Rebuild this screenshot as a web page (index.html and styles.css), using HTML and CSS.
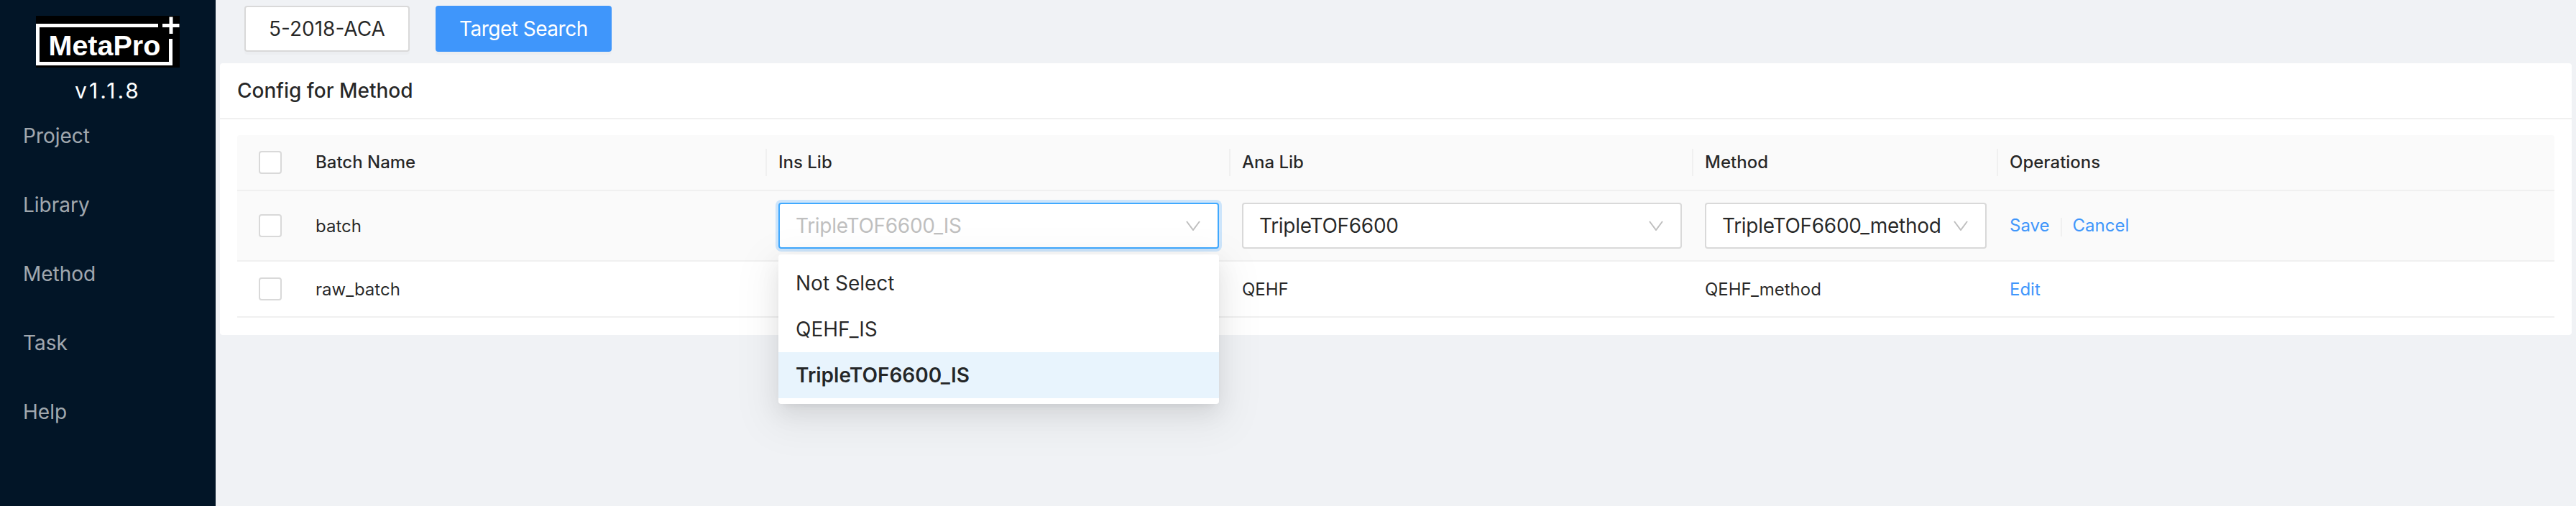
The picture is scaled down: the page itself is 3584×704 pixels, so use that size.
FILE: index.html
```html
<!DOCTYPE html>
<html lang="en">
<head>
    <meta charset="UTF-8">
    <meta name="viewport" content="width=device-width, initial-scale=1.0">
    <title>MetaPro</title>
    <link rel="stylesheet" href="styles.css">
</head>
<body>
    <aside class="sidebar">
        <svg class="logo" viewBox="0 0 200 72" width="200" height="72">
            <rect width="200" height="72" fill="#000"/>
            <path class="logo-frame" d="M170 13.5H2.5V66.5H187.5V32"/>
            <path class="logo-plus" d="M176 13.5H199.5M188 1.5V25"/>
            <text class="logo-text" x="17.5" y="55">MetaPro</text>
        </svg>
        <div class="version">v1.1.8</div>

        <nav class="menu">
            <a>Project</a>
            <a>Library</a>
            <a>Method</a>
            <a>Task</a>
            <a>Help</a>
        </nav>
    </aside>

    <main class="content">
        <div class="topbar">
            <button class="btn">5-2018-ACA</button>
            <button class="btn btn-primary">Target Search</button>
        </div>

        <section class="card">
            <h2 class="card-title">Config for Method</h2>
            <div class="card-body">
                <table class="batch-table">
                    <colgroup>
                        <col class="col-check">
                        <col class="col-lib">
                        <col class="col-lib-wide">
                        <col class="col-lib">
                        <col class="col-method">
                        <col class="col-ops">
                    </colgroup>
                    <thead>
                        <tr>
                            <th class="check-cell"><span class="checkbox"></span></th>
                            <th>Batch Name</th>
                            <th>Ins Lib</th>
                            <th>Ana Lib</th>
                            <th>Method</th>
                            <th>Operations</th>
                        </tr>
                    </thead>
                    <tbody>
                        <tr class="row-editing">
                            <td class="check-cell"><span class="checkbox"></span></td>
                            <td>batch</td>
                            <td>
                                <div class="select select-open">
                                    <span class="select-placeholder">TripleTOF6600_IS</span>
                                    <svg class="select-arrow" viewBox="0 0 20 14" width="20" height="14"><path d="M1 1L10 13L19 1"/></svg>
                                    <ul class="dropdown">
                                        <li>Not Select</li>
                                        <li>QEHF_IS</li>
                                        <li class="dropdown-selected">TripleTOF6600_IS</li>
                                    </ul>
                                </div>
                            </td>
                            <td>
                                <div class="select">
                                    <span>TripleTOF6600</span>
                                    <svg class="select-arrow" viewBox="0 0 20 14" width="20" height="14"><path d="M1 1L10 13L19 1"/></svg>
                                </div>
                            </td>
                            <td>
                                <div class="select">
                                    <span>TripleTOF6600_method</span>
                                    <svg class="select-arrow" viewBox="0 0 20 14" width="20" height="14"><path d="M1 1L10 13L19 1"/></svg>
                                </div>
                            </td>
                            <td>
                                <a class="link">Save</a><span class="divider"></span><a class="link">Cancel</a>
                            </td>
                        </tr>
                        <tr>
                            <td class="check-cell"><span class="checkbox"></span></td>
                            <td>raw_batch</td>
                            <td></td>
                            <td>QEHF</td>
                            <td>QEHF_method</td>
                            <td><a class="link">Edit</a></td>
                        </tr>
                    </tbody>
                </table>
            </div>
        </section>
    </main>
</body>
</html>
```
FILE: styles.css
```css
* {
    box-sizing: border-box;
}

html, body {
    height: 100%;
}

body {
    display: flex;
    margin: 0;
    overflow: hidden;
    font-family: Inter, "Noto Sans", sans-serif;
    font-size: 28px;
    color: rgba(0, 0, 0, 0.85);
    background-color: #f0f2f5;
}

/* Sidebar */
.sidebar {
    flex: 0 0 300px;
    padding-top: 22px;
    background-color: #021527;
}

.logo {
    display: block;
    margin: 0 auto;
}

.logo-frame,
.logo-plus {
    fill: none;
    stroke: #fff;
    stroke-width: 5;
}

.logo-text {
    font-family: "Liberation Sans", Arial, sans-serif;
    font-size: 39.5px;
    font-weight: bold;
    fill: #fff;
}

.version {
    height: 28px;
    margin-top: 18px;
    line-height: 28px;
    font-size: 30px;
    text-align: center;
    letter-spacing: 3px;
    color: #fff;
}

.menu {
    display: flex;
    flex-direction: column;
    margin-top: 1px;
}

.menu a {
    height: 96px;
    line-height: 96px;
    padding-left: 32px;
    color: rgba(255, 255, 255, 0.65);
}

/* Main area */
.content {
    flex: 1;
    min-width: 0;
}

.topbar {
    display: flex;
    gap: 36px;
    height: 88px;
    padding: 8px 0 16px 40px;
}

.btn {
    height: 64px;
    padding: 0 32px;
    font-family: inherit;
    font-size: 28px;
    color: rgba(0, 0, 0, 0.85);
    background-color: #fff;
    border: 2px solid #d9d9d9;
    border-radius: 4px;
    box-shadow: 0 4px 0 rgba(0, 0, 0, 0.015);
}

.btn-primary {
    padding: 0 31px;
    letter-spacing: -0.5px;
    color: #fff;
    background-color: #3f96fb;
    border-color: #3f96fb;
}

.card {
    margin: 0 6px;
    background-color: #fff;
    border-radius: 4px;
}

.card-title {
    height: 78px;
    margin: 0;
    padding-left: 24px;
    line-height: 76px;
    font-size: 28px;
    font-weight: 450;
    border-bottom: 2px solid #f0f0f0;
}

.card-body {
    padding: 22px 24px 24px;
}

/* Table */
.batch-table {
    width: 100%;
    table-layout: fixed;
    border-collapse: separate;
    border-spacing: 0;
    font-size: 24px;
}

.col-check {
    width: 93px;
}

.col-lib {
    width: 644px;
}

.col-lib-wide {
    width: 645px;
}

.col-method {
    width: 424px;
}

.batch-table th,
.batch-table td {
    padding: 0 16px;
    text-align: left;
    border-bottom: 2px solid #f0f0f0;
}

.batch-table th {
    position: relative;
    height: 78px;
    padding-bottom: 2px;
    font-weight: 450;
    background-color: #fafafa;
}

.batch-table th:first-child {
    border-top-left-radius: 4px;
}

.batch-table th:last-child {
    border-top-right-radius: 4px;
}

.batch-table th:not(:first-child):not(:last-child)::after {
    content: "";
    position: absolute;
    top: 19px;
    right: 0;
    width: 2px;
    height: 38px;
    background-color: #f0f0f0;
}

.batch-table td {
    height: 78px;
}

.batch-table .row-editing td {
    height: 98px;
    background-color: #fafafa;
}

.batch-table .check-cell {
    padding: 0 0 0 30px;
}

.checkbox {
    display: block;
    width: 32px;
    height: 32px;
    background-color: #fff;
    border: 2px solid #d9d9d9;
    border-radius: 4px;
}

/* Select */
.select {
    position: relative;
    display: flex;
    align-items: center;
    justify-content: space-between;
    height: 64px;
    padding: 0 24px 0 22px;
    font-size: 28px;
    white-space: nowrap;
    background-color: #fff;
    border: 2px solid #d9d9d9;
    border-radius: 4px;
}

.select > span {
    letter-spacing: -0.3px;
}

.select-open {
    border-color: #40a9ff;
    box-shadow: 0 0 0 4px rgba(24, 144, 255, 0.2);
}

.select-placeholder {
    color: #bfbfbf;
}

.select-arrow {
    flex: none;
    fill: none;
    stroke: #bfbfbf;
    stroke-width: 2;
}

.dropdown {
    position: absolute;
    top: 70px;
    left: -2px;
    right: -2px;
    margin: 0;
    padding: 8px 0;
    list-style: none;
    background-color: #fff;
    border-radius: 4px;
    box-shadow: 0 6px 12px -8px rgba(0, 0, 0, 0.12), 0 12px 32px 0 rgba(0, 0, 0, 0.08), 0 18px 56px 16px rgba(0, 0, 0, 0.05);
}

.dropdown li {
    height: 64px;
    padding: 0 24px;
    line-height: 64px;
    color: rgba(0, 0, 0, 0.85);
}

.dropdown .dropdown-selected {
    font-weight: 600;
    background-color: #e8f4fd;
}

/* Operations */
.link {
    color: #3f96fb;
}

.divider {
    display: inline-block;
    width: 2px;
    height: 26px;
    margin: 0 15px;
    vertical-align: middle;
    background-color: #f0f0f0;
}
```
